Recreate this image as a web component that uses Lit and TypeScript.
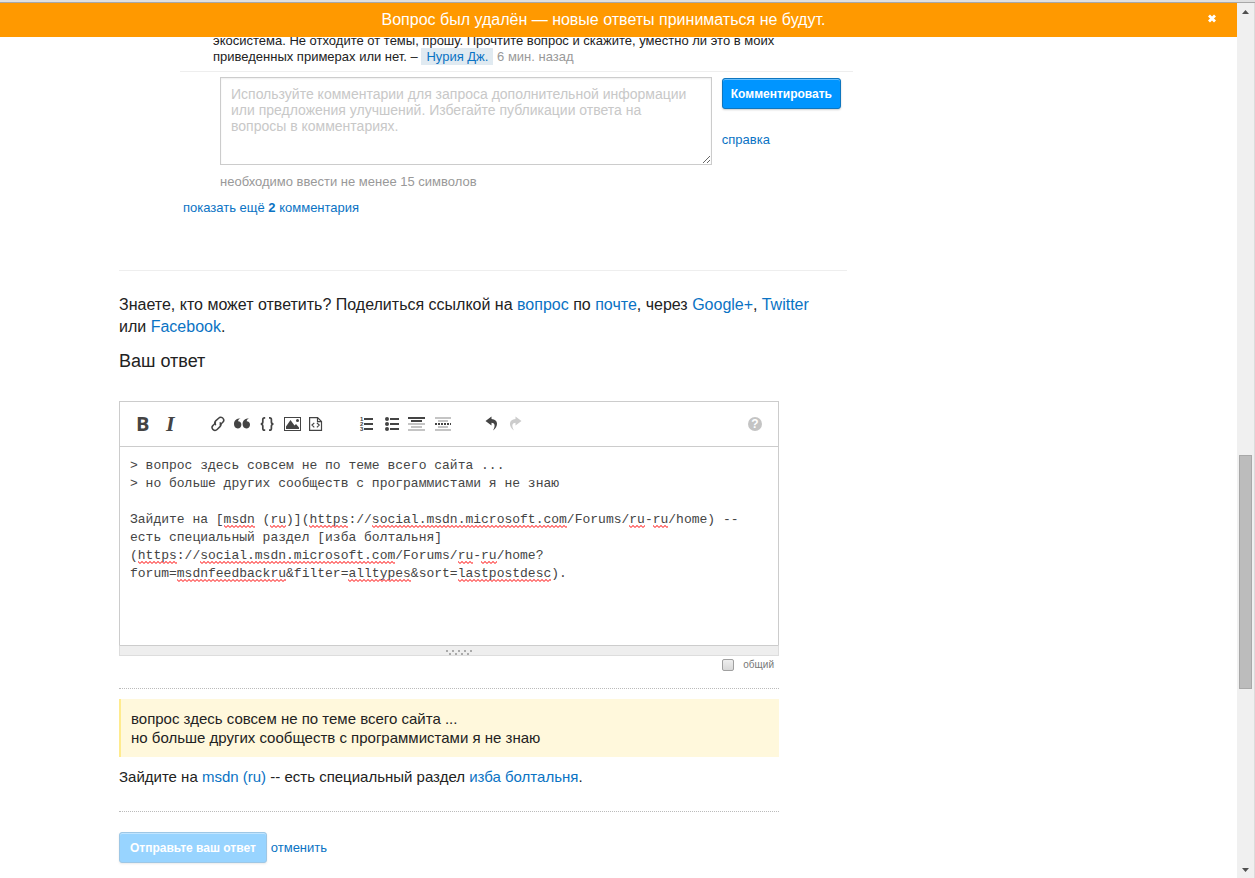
import { LitElement, html, css, svg, TemplateResult } from "lit";
import { customElement, property, state } from "lit/decorators.js";

const DRAFT = `> вопрос здесь совсем не по теме всего сайта ...
> но больше других сообществ с программистами я не знаю

Зайдите на [msdn (ru)](https://social.msdn.microsoft.com/Forums/ru-ru/home) -- есть специальный раздел [изба болтальня](https://social.msdn.microsoft.com/Forums/ru-ru/home?forum=msdnfeedbackru&filter=alltypes&sort=lastpostdesc).`;

/* words the spell checker does not know */
const UNKNOWN = /social\.msdn\.microsoft\.com|\b(?:msdnfeedbackru|lastpostdesc|alltypes|https|msdn|ru)\b/g;

/* advance of one character in the editor's 13px monospace font */
const CELL = 7.8;

/* Splits text into the rows that a box of the given number of columns shows. */
function wrapRows(text: string, columns: number): string[] {
  const rows: string[] = [];
  for (const line of text.split("\n")) {
    let row = "";
    for (const piece of line.split(/(?<=\s)|(?<=\?)|(?<=\])(?=\()/)) {
      if (row && (row + piece).trimEnd().length > columns) {
        rows.push(row);
        row = "";
      }
      row += piece;
    }
    rows.push(row);
  }
  return rows;
}

interface Tool {
  label: string;
  icon?: TemplateResult;
  off?: boolean;
}

const GAP: Tool = { label: "" };

const TOOLS: Tool[] = [
  { label: "Полужирный", icon: svg`<text class="bold" x="7" y="17">B</text>` },
  { label: "Курсив", icon: svg`<text class="italic" x="12" y="17">I</text>` },
  GAP,
  {
    label: "Ссылка",
    icon: svg`<g fill="none" stroke="currentColor" stroke-width="1.5" stroke-linecap="round">
      <path d="M11.500 10.600c-1-1.200-.8-2.700.2-3.700l2.900-2.700a2.900 2.900 0 0 1 4.500.2 2.900 2.900 0 0 1-.3 3.900l-2.600 2.500"/>
      <path d="M16.200 8.900c1 1.200.8 2.700-.2 3.700l-2.900 2.900a2.900 2.900 0 0 1-4.400-.2 2.900 2.900 0 0 1 .3-3.900l2.400-2.500"/></g>`,
  },
  {
    label: "Цитата",
    icon: svg`<path d="M11.600 4.300c-1.600.6-2.400 1.600-2.500 3 2 .1 3.300 1.500 3.300 3.400 0 2.200-1.600 3.800-3.700 3.800-2.300 0-3.700-1.700-3.700-4.400C5 6.800 7.200 4.500 11.600 4.300zM20.200 4.300c-1.600.6-2.400 1.600-2.500 3 2 .1 3.300 1.500 3.300 3.400 0 2.200-1.600 3.800-3.700 3.800-2.300 0-3.700-1.700-3.700-4.400 0-3.300 2.200-5.600 6.600-5.800z"/>`,
  },
  {
    label: "Код",
    icon: svg`<path fill="none" stroke="currentColor" stroke-width="1.700" d="M11.200 3.900h-.7c-1.300 0-1.700.6-1.700 1.700v2.300c0 1.200-.6 1.900-2 2.100 1.400.2 2 .9 2 2.100v2.300c0 1.100.4 1.700 1.700 1.700h.7M15 3.900h.7c1.300 0 1.700.6 1.700 1.700v2.300c0 1.200.6 1.900 2 2.100-1.400.2-2 .9-2 2.100v2.300c0 1.100-.4 1.700-1.700 1.700H15"/>`,
  },
  {
    label: "Изображение",
    icon: svg`<rect x="5.500" y="3.500" width="16" height="13" fill="none" stroke="currentColor"/>
      <circle cx="18.500" cy="6.500" r="1.500"/>
      <path d="M7 15v-2.500l4.500-6.500 4 5.500 1.500-1.500 3 3.500V15z"/>`,
  },
  {
    label: "Фрагмент кода",
    icon: svg`<path fill="none" stroke="currentColor" stroke-width="1.200" d="M5.600 3.600h8l3.900 3.900v8.900H5.600zM13.500 3.600v4h4M10.300 8.800l-2.300 2.300 2.300 2.300M12.900 8.800l2.300 2.300-2.300 2.300"/>`,
  },
  GAP,
  {
    label: "Нумерованный список",
    icon: svg`<path d="M10 4h9v2h-9zM10 9h9v2h-9zM10 14h9v2h-9z"/>
      <text class="digit" x="6" y="7">1</text><text class="digit" x="6" y="12">2</text><text class="digit" x="6" y="17">3</text>`,
  },
  {
    label: "Маркированный список",
    icon: svg`<path d="M11 4h9v2h-9zM11 9h9v2h-9zM11 14h9v2h-9z"/>
      <circle cx="8" cy="5" r="2"/><circle cx="8" cy="10" r="2"/><circle cx="8" cy="15" r="2"/>`,
  },
  {
    label: "Заголовок",
    icon: svg`<path d="M4 3h17v2H4zM7 6h11v2H7z"/><path class="pale" d="M4 9h17v2H4zM7 12h11v2H7zM4 15h17v2H4z"/>`,
  },
  {
    label: "Горизонтальная линия",
    icon: svg`<path class="pale" d="M6 3h16v2H6zM9 6h10v2H9zM9 12h10v2H9zM6 15h16v2H6z"/>
      <path stroke="currentColor" stroke-width="2" stroke-dasharray="2 1" d="M6 10h16"/>`,
  },
  GAP,
  { label: "Отменить", icon: svg`<path d="M12.500 2.500L6.500 7l6 4.500V8.800c3.200.2 4.300 2.800 1.500 7.700 5.500-3.500 5.800-11-1.500-11.400z"/>` },
  { label: "Повторить", off: true, icon: svg`<path d="M11.500 2.500l6 4.500-6 4.500V8.800c-3.200.2-4.300 2.800-1.500 7.700C4.500 13 4.200 5.500 11.500 5.100z"/>` },
];

const base = css`
  * { box-sizing: border-box; }
  p, h2, blockquote { margin: 0; }
  a { color: #0a73c4; text-decoration: none; }
  button { font: inherit; margin: 0; padding: 0; border: 0; background: none; cursor: pointer; }
  textarea { font: inherit; margin: 0; display: block; }
`;

const primary = css`
  .primary {
    height: 31px;
    padding: 0 8px;
    border: 1px solid #0e76bf;
    border-radius: 3px;
    background: #0095ff;
    box-shadow: inset 0 1px 0 #66bfff, 0 1px 2px rgba(0, 0, 0, 0.2);
    color: #fff;
    font-size: 12px;
    font-weight: bold;
    white-space: nowrap;
  }
  .primary:disabled { opacity: 0.4; }
`;

@customElement("notice-bar")
export class NoticeBar extends LitElement {
  static styles = [
    base,
    css`
      :host {
        display: flex;
        align-items: center;
        height: 34px;
        flex: none;
        padding-right: 16px;
        background: #f90;
        color: #fff;
        font-size: 16px;
      }
      .text { flex: 1; text-align: center; }
      .close { display: grid; place-items: start; width: 14px; height: 12px; color: #fff; }
    `,
  ];
  render() {
    return html`<span class="text"><slot></slot></span>
      <button class="close" aria-label="Закрыть">
        <svg width="10" height="10" viewBox="0 0 10 10" aria-hidden="true">
          <path d="M2 1.500l6 6m0-6l-6 6" stroke="currentColor" stroke-width="2.800" />
        </svg>
      </button>`;
  }
}

@customElement("side-scroll")
export class SideScroll extends LitElement {
  static styles = css`
    :host {
      display: grid;
      grid-template-rows: 17px 435fr 234fr 172fr 17px;
      flex: none;
      width: 18px;
      background: #f0f0f0;
      border-right: 1px solid #dcdcdc;
    }
    svg { display: block; margin: auto; }
    .thumb { grid-row: 3; margin: 0 2px; background: #bcbcbc; border: 1px solid #a8a8a8; }
    .down { grid-row: 5; }
  `;
  render() {
    return html`<svg width="7" height="4" viewBox="0 0 7 4"><path d="M0 4L3.500 0 7 4z" fill="#505050" /></svg>
      <div class="thumb"></div>
      <svg class="down" width="7" height="4" viewBox="0 0 7 4"><path d="M0 0h7L3.500 4z" fill="#505050" /></svg>`;
  }
}

@customElement("comment-thread")
export class CommentThread extends LitElement {
  static styles = [
    base,
    primary,
    css`
      :host { display: block; margin: -4px -6px 0 61px; font-size: 13px; line-height: 16px; }
      .comment { padding: 0 40px 6px 33px; border-bottom: 1px solid #eee; }
      .author { background: #e0eaf1; padding: 1px 5px; }
      .age { color: #999; }
      .form { display: flex; gap: 10px; padding: 5px 12px 0 40px; }
      .field {
        flex: 1;
        height: 88px;
        padding: 8px 14px 8px 10px;
        border: 1px solid #ccc;
        box-shadow: inset 0 1px 2px #eee;
        outline: 0;
        resize: both;
        font-size: 14px;
        line-height: 16px;
      }
      .field::placeholder { color: #c8c8c8; opacity: 1; }
      .side { padding-top: 1px; }
      .help { display: block; margin-top: 23px; }
      .hint { margin: 9px 0 0 40px; color: #999; }
      .more { display: block; margin: 10px 0 0 3px; }
    `,
  ];
  render() {
    return html`<p class="comment">
        экосистема. Не отходите от темы, прошу. Прочтите вопрос и скажите, уместно ли это в моих приведенных примерах или
        нет. – <a class="author" href="#">Нурия Дж.</a> <span class="age">6 мин. назад</span>
      </p>
      <form class="form">
        <textarea
          class="field"
          aria-label="Комментарий"
          placeholder="Используйте комментарии для запроса дополнительной информации или предложения улучшений. Избегайте публикации ответа на вопросы в комментариях."
        ></textarea>
        <div class="side">
          <button class="primary" type="button">Комментировать</button>
          <a class="help" href="#">справка</a>
        </div>
      </form>
      <p class="hint">необходимо ввести не менее 15 символов</p>
      <a class="more" href="#">показать ещё <b>2</b> комментария</a>`;
  }
}

@customElement("answer-editor")
export class AnswerEditor extends LitElement {
  @property() value = "";
  @state() private columns = 81;

  private watcher = new ResizeObserver(([entry]) => {
    this.columns = Math.floor(entry.contentRect.width / CELL);
  });

  static styles = [
    base,
    css`
      :host { display: block; }
      .box { border: 1px solid #ccc; }
      .bar { display: flex; align-items: center; height: 45px; padding: 0 10px 0 9px; border-bottom: 1px solid #ccc; color: #444; }
      .tool { width: 25px; height: 20px; color: inherit; flex: none; }
      .tool:disabled { color: #ccc; }
      .tool svg { display: block; fill: currentColor; overflow: visible; }
      .pale { fill: #c4c4c4; }
      .bold { font: 700 20px "Open Sans", sans-serif; }
      .italic { font: italic bold 22px "Liberation Serif", serif; }
      .digit { font: bold 6px "Liberation Sans", sans-serif; }
      .space { flex: 1; }
      .help { width: 25px; height: 20px; color: #c4c4c4; }
      .help svg { display: block; fill: currentColor; }
      .mark { fill: #fff; font: bold 12px "Liberation Sans", sans-serif; text-anchor: middle; }
      .pad { display: grid; height: 198px; font: 13px/18px "Liberation Mono", monospace; color: #444; }
      .layer { grid-area: 1 / 1; width: 100%; padding: 10px 14px 10px 10px; overflow: hidden; }
      .input {
        border: 0;
        outline: 0;
        background: none;
        color: inherit;
        white-space: pre-wrap;
        resize: none;
      }
      .row { display: grid; height: 18px; padding-top: 14px; }
      .typo {
        grid-area: 1 / 1;
        height: 3px;
        background: url("data:image/svg+xml,%3Csvg xmlns='http://www.w3.org/2000/svg' width='4' height='3'%3E%3Cpath d='M-1 -.5L2 2.500 5 -.5' fill='none' stroke='%23f00'/%3E%3C/svg%3E") repeat-x;
      }
      .grip {
        display: grid;
        place-items: center;
        height: 11px;
        margin: 0 -1px -1px;
        padding: 3px 0 0 20px;
        background: #eee;
        border: 1px solid #ddd;
        border-top-color: #ccc;
        cursor: s-resize;
      }
      .grip svg { display: block; fill: #aaa; }
    `,
  ];

  firstUpdated() {
    this.watcher.observe(this.renderRoot.querySelector("textarea")!);
  }

  disconnectedCallback() {
    super.disconnectedCallback();
    this.watcher.disconnect();
  }

  private edit(e: Event) {
    this.value = (e.target as HTMLTextAreaElement).value;
  }

  render() {
    return html`<div class="box">
      <div class="bar" role="toolbar" aria-label="Форматирование">
        ${TOOLS.map((t) =>
          t.icon
            ? html`<button class="tool" type="button" aria-label=${t.label} ?disabled=${t.off}>
                <svg width="25" height="20" viewBox="0 0 25 20" aria-hidden="true">${t.icon}</svg>
              </button>`
            : html`<span class="tool"></span>`
        )}
        <span class="space"></span>
        <button class="help" type="button" aria-label="Справка по форматированию">
          <svg width="25" height="20" viewBox="0 0 25 20" aria-hidden="true">
            <circle cx="12" cy="10" r="7" /><text class="mark" x="12" y="14">?</text>
          </svg>
        </button>
      </div>
      <div class="pad">
        <div class="layer" aria-hidden="true">
          ${wrapRows(this.value, this.columns).map(
            (row) =>
              html`<div class="row">${[...row.matchAll(UNKNOWN)].map(
                (m) => html`<i class="typo" style="margin-left:${m.index}ch;width:${m[0].length}ch"></i>`
              )}</div>`
          )}
        </div>
        <textarea class="layer input" aria-label="Текст ответа" spellcheck="false" .value=${this.value} @input=${this.edit}></textarea>
      </div>
      <div class="grip">
        <svg width="27" height="5" viewBox="0 0 27 5" aria-hidden="true">
          ${[0, 1, 2, 3, 4].map((i) => svg`<rect x=${i * 6} y="0" width="2" height="2"/>`)}
          ${[0, 1, 2, 3].map((i) => svg`<rect x=${i * 6 + 3} y="3" width="2" height="2"/>`)}
        </svg>
      </div>
    </div>`;
  }
}

@customElement("app-root")
export class AppRoot extends LitElement {
  @state() private shared = false;

  static styles = [
    base,
    primary,
    css`
      :host {
        display: flex;
        flex-direction: column;
        height: 100vh;
        overflow: hidden;
        background: #fff;
        color: #222;
        font: 13px/16px "Liberation Sans", Arial, sans-serif;
      }
      .edge { flex: none; height: 3px; background: #e0e0e0; border-bottom: 1px solid #a8a8a8; }
      .window { flex: 1; display: flex; min-height: 0; }
      .view { flex: 1; min-width: 0; display: flex; flex-direction: column; }
      .scroll { flex: 1; min-height: 0; overflow: hidden; }
      .page { max-width: 999px; margin: 0 auto; }
      .main { max-width: 728px; }
      .rule { height: 1px; border: 0; background: #eee; margin: 54px 0 23px; }
      .share { font-size: 16px; line-height: 22px; padding-right: 20px; }
      .title { font-size: 18px; font-weight: normal; line-height: 22px; margin: 12px 0 29px; }
      .answer { max-width: 660px; }
      .wiki { display: flex; justify-content: flex-end; align-items: center; gap: 9px; height: 18px; padding-right: 5px; font-size: 10px; color: #777; }
      .tick {
        appearance: none;
        width: 12px;
        height: 12px;
        margin: 0;
        border: 1px solid #a0a0a0;
        border-radius: 2px;
        background: linear-gradient(#eee, #d8d8d8);
      }
      .tick:checked { background: #777; }
      .preview { margin-top: 14px; padding: 10px 0 25px; border: 1px dotted #bbb; border-width: 1px 0; font-size: 15px; line-height: 19px; }
      .quote { padding: 10px; border-left: 2px solid #ffeb8e; background: #fff8dc; margin-bottom: 10px; }
      .send { display: flex; align-items: center; gap: 4px; margin-top: 20px; }
      .send .primary { padding: 0 10px; }
    `,
  ];

  render() {
    return html`<div class="edge"></div>
      <div class="window">
        <div class="view">
          <notice-bar role="status">Вопрос был удалён — новые ответы приниматься не будут.</notice-bar>
          <div class="scroll">
            <div class="page">
              <main class="main">
                <comment-thread></comment-thread>
                <hr class="rule" />
                <p class="share">
                  Знаете, кто может ответить? Поделиться ссылкой на <a href="#">вопрос</a> по <a href="#">почте</a>, через
                  <a href="#">Google+</a>, <a href="#">Twitter</a> или <a href="#">Facebook</a>.
                </p>
                <h2 class="title">Ваш ответ</h2>
                <div class="answer">
                  <answer-editor .value=${DRAFT}></answer-editor>
                  <div class="wiki">
                    <input
                      class="tick"
                      id="wiki"
                      type="checkbox"
                      .checked=${this.shared}
                      @change=${() => (this.shared = !this.shared)}
                    /><label for="wiki">общий</label>
                  </div>
                  <div class="preview">
                    <blockquote class="quote">
                      вопрос здесь совсем не по теме всего сайта ...<br />но больше других сообществ с программистами я не знаю
                    </blockquote>
                    <p>Зайдите на <a href="#">msdn (ru)</a> -- есть специальный раздел <a href="#">изба болтальня</a>.</p>
                  </div>
                  <div class="send">
                    <button class="primary" type="button" disabled>Отправьте ваш ответ</button>
                    <a href="#">отменить</a>
                  </div>
                </div>
              </main>
            </div>
          </div>
        </div>
        <side-scroll aria-hidden="true"></side-scroll>
      </div>`;
  }
}
